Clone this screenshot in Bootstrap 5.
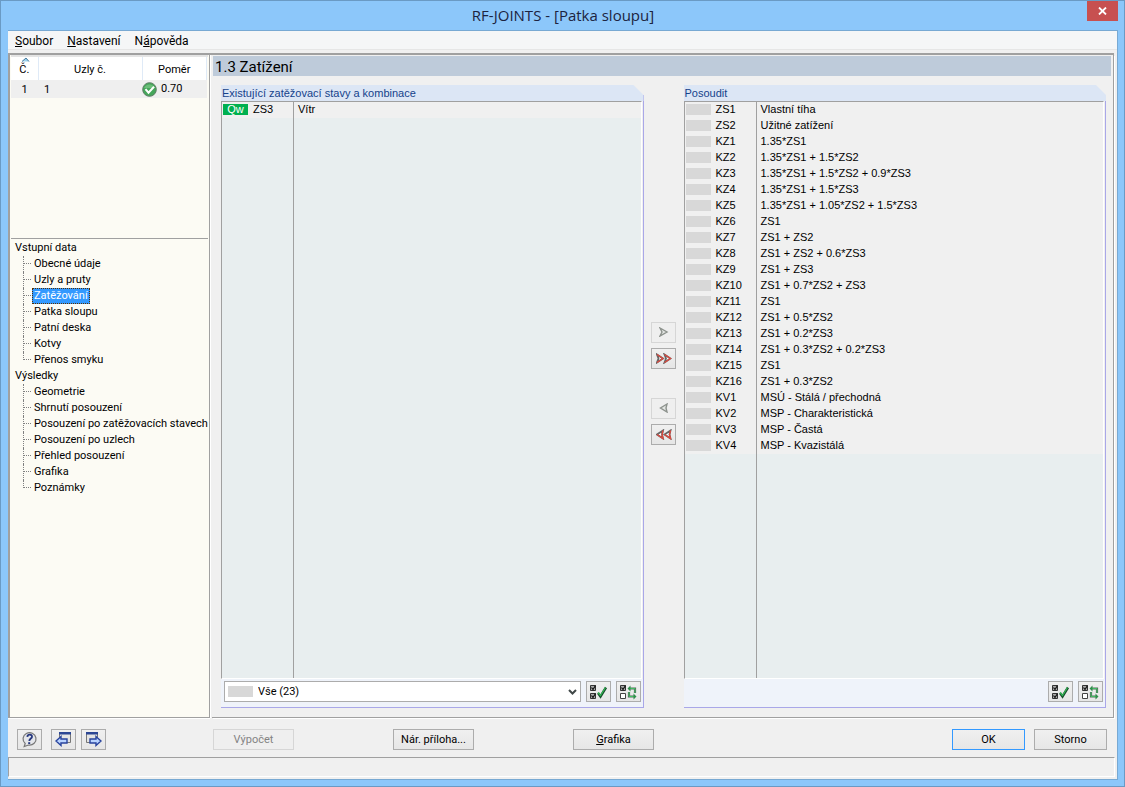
<!DOCTYPE html>
<html lang="cs">
<head>
<meta charset="utf-8">
<meta name="viewport" content="width=device-width, initial-scale=1">
<title>RF-JOINTS - [Patka sloupu]</title>
<link href="https://cdn.jsdelivr.net/npm/bootstrap@5.3.0/dist/css/bootstrap.min.css" rel="stylesheet">
<style>
:root { --edge: #a0a0a0; --face: #f0f0f0; --violet: #a9a7e8; --cream: #fcfbf4; }
body { font: 11px/16px Roboto, "Noto Sans", sans-serif; color: #000; background: #8cc7fa; }
a { color: inherit; text-decoration: none; }
.window-frame { min-height: 100vh; border: 1px solid #6a9ac4; padding: 0 6px 6px 7px; }
.titlebar { height: 29px; font: 15px/29px "Open Sans", "Noto Sans", sans-serif; color: #1c2340; }
.close-btn { width: 31px; height: 20px; right: 0; top: 0; background: #c75050; border: 0; padding: 0; display: flex; align-items: center; justify-content: center; }
.client { background: var(--face); border: 1px solid #78a9d3; border-width: 1px 1px 1px 0; }
.menubar { height: 19px; background: #f5f6f7; border-bottom: 1px solid #e6e6e6; font-size: 12px; line-height: 21px; gap: 14px; padding-left: 7px; }
.workarea { border-top: 2px solid var(--edge); margin: 3px 3px 0 0; gap: 2px; }
.side { width: 202px; border: 1px solid var(--edge); border-left-width: 2px; border-top: 0; background: var(--cream); box-shadow: 0 1px #fff, 1px 0 #fff; }
.node-pane { height: 184px; border-bottom: 1px solid var(--edge); border-top: 2px solid #e4e4e4; margin: 0 1px; }
.node-table { width: 196px; table-layout: fixed; }
.node-table th { height: 23px; padding: 3px 0 0; background: #fff; font-weight: 400; text-align: center; border-right: 1px solid #dfeaf7; }
.node-table td { height: 18px; padding: 1px 0 0 6px; background: #efefef; }
.node-table td:first-child { padding: 1px 0 0; text-align: center; }
.node-table td:last-child { padding: 0; }
.sort-mark { top: 0; left: 10px; }
.tree { padding: 1px 0 0 5px; margin: 0; list-style: none; }
.tree ul { list-style: none; margin: 0 0 0 8px; padding: 0; }
.tree ul li { position: relative; height: 16px; padding-left: 9px; }
.tree ul li::before { content: ""; position: absolute; left: 0; top: 0; bottom: 0; border-left: 1px dotted #808080; }
.tree ul li:last-child::before { bottom: 8px; }
.tree ul li::after { content: ""; position: absolute; left: 0; top: 7px; width: 8px; border-top: 1px dotted #808080; }
.tree a { display: block; width: max-content; height: 16px; line-height: 16px; padding: 0 2px; white-space: nowrap; }
.tree a.active { background: #3399ff; color: #fff; outline: 1px dotted #5a3000; outline-offset: -1px; }
.main-pane { border: 1px solid var(--edge); border-width: 0 1px 1px 0; box-shadow: 1px 1px #fff; padding: 1px 2px 9px 1px; }
.page-title { height: 20px; font: 15px/22px Roboto, "Noto Sans", sans-serif; background: #becbda; padding-left: 2px; margin: 0; }
.groups { padding: 9px 5px 0 8px; }
.group-box { flex: 1 1 0; min-width: 0; background: linear-gradient(var(--violet), var(--violet)) right 0 top 10px / 1px 100% no-repeat; border-bottom: 1px solid var(--violet); }
.group-head { height: 16px; font: 11px/17px "Liberation Sans", sans-serif; color: #15428b; background: #dce6f5; padding-left: 1px; margin: 0; clip-path: polygon(0 0, calc(100% - 10px) 0, 100% 10px, 100% 100%, 0 100%); }
.load-list { margin-right: 2px; border: 1px solid var(--edge); border-right: 1px solid #fff; border-bottom: 1px solid #fff; background: linear-gradient(to right, transparent 71px, var(--edge) 71px, var(--edge) 72px, transparent 72px) #e8eeef; font: 11px/15px "Liberation Sans", sans-serif; }
.load-list table { width: 100%; table-layout: fixed; }
.load-list td { height: 16px; padding: 0 0 1px 4px; background: #f0f0f0; }
.load-list td:first-child { padding: 0 0 1px 1px; background: linear-gradient(to left, var(--edge) 1px, #f0f0f0 1px); }
.load-id { gap: 5px; }
.swatch { display: block; width: 25px; height: 11px; background: #d8d8d8; }
.swatch-wind { background: #00b050; color: #fff; line-height: 11px; text-align: center; }
.group-foot { height: 28px; margin-right: 1px; background: #eff3fa; padding: 2px 2px 0 3px; gap: 5px; }
.group-foot select { height: 21px; min-width: 0; border: 1px solid #acacac; border-radius: 0; appearance: none; color: #000; padding: 0 20px 0 33px; font: inherit;
  background: url("data:image/svg+xml,%3Csvg xmlns='http://www.w3.org/2000/svg' width='9' height='6'%3E%3Cpath d='M1 1l3.5 3.5L8 1' fill='none' stroke='%23404848' stroke-width='2'/%3E%3C/svg%3E") right 3px center no-repeat, linear-gradient(#d8d8d8, #d8d8d8) 3px 4px / 25px 11px no-repeat #fff; }
.win-btn { height: 21px; width: 81px; padding: 0; font: inherit; line-height: 19px; color: #000; border: 1px solid #acacac; border-radius: 0; background: linear-gradient(#f0f0f0, #e6e6e6); display: flex; align-items: center; justify-content: center; }
.win-btn:disabled { background: #efefef; border-color: #d6d6d6; color: #838383; opacity: 1; }
.win-btn.default { border-color: #3399ff; }
.win-btn.dialog { width: 73px; }
.win-btn.tool { width: 25px; }
.movers { width: 40px; padding-bottom: 27px; gap: 5px; }
.movers .second { margin-top: 24px; }
.footer-bar { height: 38px; padding: 3px 10px 0 9px; margin-top: 1px; }
.footer-tools { gap: 5px; margin-left: 9px; }
.footer-actions { gap: 99px; margin-left: 107px; }
.footer-confirm { gap: 9px; }
.statusbar { height: 20px; border: 1px solid #fff; border-top-color: var(--edge); border-left-color: var(--edge); margin: 0 2px 2px 0; }
</style>
</head>
<body>
<div class="window-frame d-flex flex-column">
  <header class="titlebar position-relative text-center">
    RF-JOINTS - [Patka sloupu]
    <button class="close-btn position-absolute" type="button" aria-label="Zavřít">
      <svg width="9" height="8" viewBox="0 0 9 8"><path d="M1 .5l7 7M8 .5l-7 7" stroke="#fff" stroke-width="1.8"/></svg>
    </button>
  </header>
  <div class="client flex-grow-1 d-flex flex-column">
    <nav class="menubar d-flex">
      <a href="#"><u>S</u>oubor</a><a href="#"><u>N</u>astavení</a><a href="#">N<u>á</u>pověda</a>
    </nav>
    <div class="workarea flex-grow-1 d-flex">
      <aside class="side flex-shrink-0">
        <div class="node-pane">
          <table class="node-table">
            <colgroup><col style="width:27px"><col style="width:104px"><col></colgroup>
            <thead><tr>
              <th class="position-relative">Č.<svg class="sort-mark position-absolute" width="9" height="5"><path d="M1 4.500L5 1l3 3.500" fill="#9cd2ee" stroke="#46799c"/></svg></th>
              <th>Uzly č.</th><th>Poměr</th>
            </tr></thead>
            <tbody><tr><td>1</td><td>1</td><td>
              <div class="d-flex align-items-center gap-1">
                <svg width="15" height="15" viewBox="0 0 15 15"><circle cx="7.500" cy="7.500" r="6.800" fill="#45a65a" stroke="#5d7c64"/><path d="M2 6a6 6 0 0 1 11 0z" fill="#6bbd79"/><path d="M3.500 7.200l3 3.500 5.500-6" fill="none" stroke="#fff" stroke-width="2"/></svg>0.70
              </div></td></tr></tbody>
          </table>
        </div>
        <ul class="tree">
          <li>Vstupní data
            <ul>
              <li><a href="#">Obecné údaje</a></li><li><a href="#">Uzly a pruty</a></li><li><a href="#" class="active">Zatěžování</a></li><li><a href="#">Patka sloupu</a></li><li><a href="#">Patní deska</a></li><li><a href="#">Kotvy</a></li><li><a href="#">Přenos smyku</a></li>
            </ul>
          </li>
          <li>Výsledky
            <ul>
              <li><a href="#">Geometrie</a></li><li><a href="#">Shrnutí posouzení</a></li><li><a href="#">Posouzení po zatěžovacích stavech</a></li><li><a href="#">Posouzení po uzlech</a></li><li><a href="#">Přehled posouzení</a></li><li><a href="#">Grafika</a></li><li><a href="#">Poznámky</a></li>
            </ul>
          </li>
        </ul>
      </aside>
      <main class="main-pane flex-grow-1 d-flex flex-column">
        <h1 class="page-title">1.3 Zatížení</h1>
        <div class="groups flex-grow-1 d-flex">
          <section class="group-box d-flex flex-column">
            <h2 class="group-head">Existující zatěžovací stavy a kombinace</h2>
            <div class="load-list flex-grow-1">
              <table>
                <colgroup><col style="width:72px"><col></colgroup>
                <tbody><tr><td><div class="load-id d-flex align-items-center"><span class="swatch swatch-wind">Qw</span>ZS3</div></td><td>Vítr</td></tr></tbody>
              </table>
            </div>
            <div class="group-foot d-flex">
              <select class="flex-grow-1" aria-label="Filtr zatížení"><option>Vše (23)</option></select>
              <button class="win-btn tool" type="button" aria-label="Vybrat vše"><svg width="19" height="16"><use href="#ico-all"/></svg></button>
              <button class="win-btn tool" type="button" aria-label="Obrátit výběr"><svg width="19" height="16"><use href="#ico-invert"/></svg></button>
            </div>
          </section>
          <div class="movers d-flex flex-column align-items-center justify-content-center">
            <button class="win-btn tool" type="button" disabled aria-label="Přidat"><svg width="10" height="10" viewBox="0 0 10 10"><path d="M1 1l7 4-7 4 2-4z" fill="#e3e6e3" stroke="#8d928d" stroke-width="1.400"/></svg></button>
            <button class="win-btn tool" type="button" aria-label="Přidat vše"><svg width="16" height="11" viewBox="0 0 16 11"><path d="M1 1.500l6 4-6 4 1.500-4zM8.500 1.500l6 4-6 4 1.500-4z" fill="#fff" stroke="#666" stroke-width="1.800"/><path d="M1 1.500l6 4-6 4M8.500 1.500l6 4-6 4" fill="none" stroke="#e0483e" stroke-width="1.300"/></svg></button>
            <button class="win-btn tool second" type="button" disabled aria-label="Odebrat"><svg width="10" height="10" viewBox="0 0 10 10"><path d="M8 1L1.500 5 8 9 7 5z" fill="#e3e6e3" stroke="#8d928d" stroke-width="1.400"/></svg></button>
            <button class="win-btn tool" type="button" aria-label="Odebrat vše"><svg width="16" height="11" viewBox="0 0 16 11"><path d="M7 1.500l-6 4 6 4-1-4zM14.500 1.500l-6 4 6 4-1-4z" fill="#fff" stroke="#666" stroke-width="1.800"/><path d="M1 5.500l6 4-1-4 1-4M8.500 5.500l6 4-1-4 1-4" fill="none" stroke="#e0483e" stroke-width="1.300"/></svg></button>
          </div>
          <section class="group-box d-flex flex-column">
            <h2 class="group-head">Posoudit</h2>
            <div class="load-list flex-grow-1">
              <table>
                <colgroup><col style="width:72px"><col></colgroup>
                <tbody id="assess"></tbody>
              </table>
            </div>
            <div class="group-foot d-flex justify-content-end">
              <button class="win-btn tool" type="button" aria-label="Vybrat vše"><svg width="19" height="16"><use href="#ico-all"/></svg></button>
              <button class="win-btn tool" type="button" aria-label="Obrátit výběr"><svg width="19" height="16"><use href="#ico-invert"/></svg></button>
            </div>
          </section>
        </div>
      </main>
    </div>
    <footer class="footer-bar d-flex align-items-center">
      <button class="win-btn tool" type="button" aria-label="Nápověda"><svg width="17" height="17" viewBox="0 0 17 17"><path d="M3.200 15.500l1-3A6.500 6.200 0 1 1 7.500 14z" fill="#e4e6ea" stroke="#777" stroke-width="1.200"/><path d="M6.300 5.800c.5-3 5-2.600 4.700 0C10.800 7.500 8.300 7.600 8.300 10" fill="none" stroke="#26377e" stroke-width="1.800"/><path d="M7.200 11.200h2v1.800h-2z" fill="#26377e"/></svg></button>
      <div class="footer-tools d-flex">
        <button class="win-btn tool" type="button" aria-label="Předchozí"><svg width="17" height="17" viewBox="0 0 17 17"><path d="M4.500 2.500h11v9h-11z" fill="#e4e4e4" stroke="#777"/><path d="M4 1h12v2.500H4z" fill="#2c4694"/><path d="M1 10l5-4.500V8h6v4H6v2.500z" fill="#b9d3ff" stroke="#28439d" stroke-width="1.400"/></svg></button>
        <button class="win-btn tool" type="button" aria-label="Další"><svg width="17" height="17" viewBox="0 0 17 17"><path d="M1.500 2.500h11v9h-11z" fill="#e4e4e4" stroke="#777"/><path d="M1 1h12v2.500H1z" fill="#2c4694"/><path d="M16 10l-5-4.500V8H5v4h6v2.500z" fill="#b9d3ff" stroke="#28439d" stroke-width="1.400"/></svg></button>
      </div>
      <div class="footer-actions d-flex">
        <button class="win-btn" type="button" disabled>Výpočet</button>
        <button class="win-btn" type="button">Nár. příloha...</button>
        <button class="win-btn" type="button"><span><u>G</u>rafika</span></button>
      </div>
      <div class="footer-confirm d-flex ms-auto">
        <button class="win-btn dialog default" type="button">OK</button>
        <button class="win-btn dialog" type="button">Storno</button>
      </div>
    </footer>
    <div class="statusbar"></div>
  </div>
</div>

<svg class="d-none">
  <symbol id="ico-all" viewBox="0 0 19 16"><path d="M1.500 1.500h5v5h-5zM1.500 9.500h5v5h-5z" fill="#aaa" stroke="#333"/><path d="M2.500 3.500l1.500 2 2.500-4M2.500 11.500l1.500 2 2.500-4" fill="none" stroke="#111" stroke-width="1.200"/><path d="M9 9l2.500 3.500L17 3.500" fill="none" stroke="#174d2b" stroke-width="2.400"/><path d="M9 8.500l2.500 3L16.500 3.500" fill="none" stroke="#33b854" stroke-width="1.200"/></symbol>
  <symbol id="ico-invert" viewBox="0 0 19 16"><path d="M1.500 1.500h5v5h-5z" fill="#aaa" stroke="#333"/><path d="M1.500 9.500h5v5h-5z" fill="#fff" stroke="#444"/><path d="M2.500 3.500l1.500 2 2.500-4" fill="none" stroke="#111" stroke-width="1.200"/><path d="M10 4.500h6v4.500M16 12.500h-6V8" fill="none" stroke="#52685a" stroke-width="2.200"/><path d="M10 4.500h6v4.500M16 12.500h-6V8" fill="none" stroke="#43bd62" stroke-width="1"/><path d="M11.500 1.500v6l-3-3zM14.500 9.500v6l3-3z" fill="#2f8f4b"/></symbol>
</svg>

<script src="https://cdn.jsdelivr.net/npm/bootstrap@5.3.0/dist/js/bootstrap.bundle.min.js"></script>
<script>
const loads = [
  ["ZS1", "Vlastní tíha"], ["ZS2", "Užitné zatížení"],
  ["KZ1", "1.35*ZS1"], ["KZ2", "1.35*ZS1 + 1.5*ZS2"], ["KZ3", "1.35*ZS1 + 1.5*ZS2 + 0.9*ZS3"],
  ["KZ4", "1.35*ZS1 + 1.5*ZS3"], ["KZ5", "1.35*ZS1 + 1.05*ZS2 + 1.5*ZS3"],
  ["KZ6", "ZS1"], ["KZ7", "ZS1 + ZS2"], ["KZ8", "ZS1 + ZS2 + 0.6*ZS3"], ["KZ9", "ZS1 + ZS3"],
  ["KZ10", "ZS1 + 0.7*ZS2 + ZS3"], ["KZ11", "ZS1"], ["KZ12", "ZS1 + 0.5*ZS2"], ["KZ13", "ZS1 + 0.2*ZS3"],
  ["KZ14", "ZS1 + 0.3*ZS2 + 0.2*ZS3"], ["KZ15", "ZS1"], ["KZ16", "ZS1 + 0.3*ZS2"],
  ["KV1", "MSÚ - Stálá / přechodná"], ["KV2", "MSP - Charakteristická"], ["KV3", "MSP - Častá"], ["KV4", "MSP - Kvazistálá"]
];
document.getElementById("assess").innerHTML = loads.map(([id, text]) =>
  `<tr><td><div class="load-id d-flex align-items-center"><span class="swatch"></span>${id}</div></td><td>${text}</td></tr>`).join("");
</script>
</body>
</html>
